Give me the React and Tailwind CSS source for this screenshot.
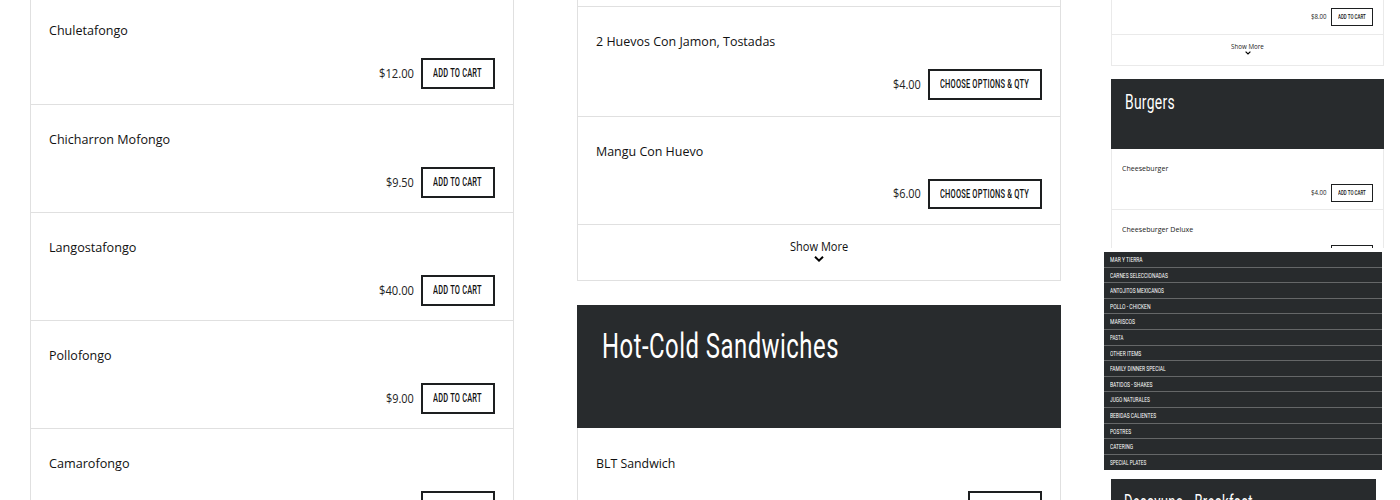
import React, { useLayoutEffect, useRef, useState } from "react";

// Single line of text whose width is normalised to `w` pixels.
function Fit({ w, className = "", children }) {
  const ref = useRef(null);
  const [k, setK] = useState(1);
  useLayoutEffect(() => {
    setK(w / ref.current.offsetWidth);
  }, [w]);
  return (
    <span className="block shrink-0" style={{ width: w }}>
      <span
        ref={ref}
        className={`block w-max origin-left whitespace-nowrap ${className}`}
        style={{ transform: `scaleX(${k})` }}
      >
        {children}
      </span>
    </span>
  );
}

const display = "font-['Roboto',sans-serif]";

function Chevron({ className }) {
  return (
    <svg viewBox="0 0 10 6" className={className} fill="none" stroke="#000" strokeWidth="2">
      <path d="M1 0.8 L5 4.6 L9 0.8" />
    </svg>
  );
}

function Item({ name, nameW, price, priceW, label = "ADD TO CART", labelW = 49, className = "h-[108px]" }) {
  return (
    <div className={`flex shrink-0 flex-col border-b border-[#e0e0e0] pl-[17.5px] pr-[18.5px] pt-[23px] ${className}`}>
      <Fit w={nameW} className="text-[13.5px] leading-[23px] text-[#111]">{name}</Fit>
      <div className="mt-[16px] flex items-center justify-end gap-[7.5px]">
        <Fit w={priceW} className="-mt-[1.5px] text-[11.7px] leading-[20px] text-[#222]">{price}</Fit>
        <button className="flex h-[30.5px] items-center border-2 border-[#1d1f20] px-[10.25px]">
          <Fit w={labelW} className={`${display} -mt-[0.5px] text-[12.5px] font-medium leading-[16px] tracking-wide text-[#111]`}>{label}</Fit>
        </button>
      </div>
    </div>
  );
}

function SmallBuy({ price }) {
  return (
    <div className="flex items-center justify-end gap-[4px]">
      <Fit w={16} className="text-[6.5px] leading-[10px] text-[#222]">{price}</Fit>
      <button className="flex h-[17.5px] items-center border border-[#1d1f20] px-[6px]">
        <Fit w={28} className={`${display} text-[7px] font-medium leading-[10px] text-[#111]`}>ADD TO CART</Fit>
      </button>
    </div>
  );
}

const nav = [
  ["MAR Y TIERRA", 32.5],
  ["CARNES SELECCIONADAS", 58],
  ["ANTOJITOS MEXICANOS", 54],
  ["POLLO - CHICKEN", 40.5],
  ["MARISCOS", 25],
  ["PASTA", 13.5],
  ["OTHER ITEMS", 31],
  ["FAMILY DINNER SPECIAL", 55.5],
  ["BATIDOS - SHAKES", 42.5],
  ["JUGO NATURALES", 40],
  ["BEBIDAS CALIENTES", 46],
  ["POSTRES", 21],
  ["CATERING", 23],
  ["SPECIAL PLATES", 36.5],
];

export default function App() {
  return (
    <div className="flex h-[500px] w-[1400px] overflow-hidden bg-white font-['Open_Sans','Noto_Sans',sans-serif]">
      <section className="ml-[30px] -mt-[4px] flex w-[484px] shrink-0 flex-col border-x border-[#e0e0e0]">
        <Item name="Chuletafongo" nameW={79} price="$12.00" priceW={34.5} className="h-[109px]" />
        <Item name="Chicharron Mofongo" nameW={121} price="$9.50" priceW={28} />
        <Item name="Langostafongo" nameW={87} price="$40.00" priceW={34.5} />
        <Item name="Pollofongo" nameW={63} price="$9.00" priceW={28} />
        <Item name="Camarofongo" nameW={80.5} price="$15.00" priceW={34.5} />
      </section>

      <section className="ml-[63px] flex w-[484px] shrink-0 flex-col">
        <div className="flex shrink-0 flex-col border-x border-[#e0e0e0]">
          <div className="h-[7px] border-b border-[#e0e0e0]" />
          <Item name="2 Huevos Con Jamon, Tostadas" nameW={179.5} price="$4.00" priceW={28} label="CHOOSE OPTIONS & QTY" labelW={89} className="h-[109.5px]" />
          <Item name="Mangu Con Huevo" nameW={107} price="$6.00" priceW={28} label="CHOOSE OPTIONS & QTY" labelW={89} className="h-[108.5px]" />
          <div className="flex h-[56px] flex-col items-center border-b border-[#e0e0e0] pt-[12px]">
            <Fit w={58} className="text-[12px] leading-[20px] text-[#111]">Show More</Fit>
            <Chevron className="-mt-px h-[6px] w-[10px]" />
          </div>
        </div>
        <header className="mt-[24px] h-[123px] shrink-0 bg-[#282b2d] pl-[25px] pt-[22px]">
          <Fit w={237} className={`${display} text-[35px] leading-[40px] tracking-[0.02em] text-white`}>Hot-Cold Sandwiches</Fit>
        </header>
        <div className="flex shrink-0 flex-col border-x border-[#e0e0e0] pt-[0.5px]">
          <Item name="BLT Sandwich" nameW={79.5} price="$4.00" priceW={28} />
        </div>
      </section>

      <aside className="ml-[43px] flex w-[296px] shrink-0 flex-col">
        <div className="ml-[7px] flex h-[248px] w-[273px] shrink-0 flex-col overflow-hidden">
          <div className="h-[35px] shrink-0 border-x border-b border-[#eaeaea] pr-[10px] pt-[8px]">
            <SmallBuy price="$8.00" />
          </div>
          <div className="flex h-[31px] shrink-0 flex-col items-center border-x border-b border-[#eaeaea] pt-[7px]">
            <Fit w={33} className="text-[6.8px] leading-[10px] text-[#222]">Show More</Fit>
            <Chevron className="-mt-px h-[4px] w-[6px]" />
          </div>
          <header className="mt-[13px] h-[70px] shrink-0 bg-[#282b2d] pl-[14px] pt-[11px]">
            <Fit w={50} className={`${display} text-[20px] leading-[24px] tracking-[0.02em] text-white`}>Burgers</Fit>
          </header>
          <div className="h-[61px] shrink-0 border-x border-b border-[#eaeaea] pl-[9.5px] pr-[10px] pt-[13px]">
            <Fit w={46.5} className="text-[7.6px] leading-[13px] text-[#222]">Cheeseburger</Fit>
            <div className="mt-[9px]"><SmallBuy price="$4.00" /></div>
          </div>
          <div className="h-[61px] shrink-0 border-x border-[#eaeaea] pl-[9.5px] pr-[10px] pt-[13px]">
            <Fit w={71} className="text-[7.6px] leading-[13px] text-[#222]">Cheeseburger Deluxe</Fit>
            <div className="mt-[9px]"><SmallBuy price="$5.00" /></div>
          </div>
        </div>
        <nav className="mt-[4px] h-[218.3px] w-[278px] shrink-0 bg-[#282b2d]">
          {nav.map(([t, w], i) => (
            <div key={t} className={`flex h-[15.6px] items-center pl-[6px] pt-[1.5px] ${i < nav.length - 1 ? "border-b border-[#656768]" : ""}`}>
              <Fit w={w} className={`${display} text-[7.5px] leading-[10px] text-white`}>{t}</Fit>
            </div>
          ))}
        </nav>
        <header className="ml-[6.5px] mt-[8.7px] h-[70px] w-[265px] shrink-0 bg-[#282b2d] pl-[13.5px] pt-[11px]">
          <Fit w={129} className={`${display} text-[20px] leading-[24px] tracking-[0.02em] text-white`}>Desayuno - Breakfast</Fit>
        </header>
      </aside>
    </div>
  );
}
